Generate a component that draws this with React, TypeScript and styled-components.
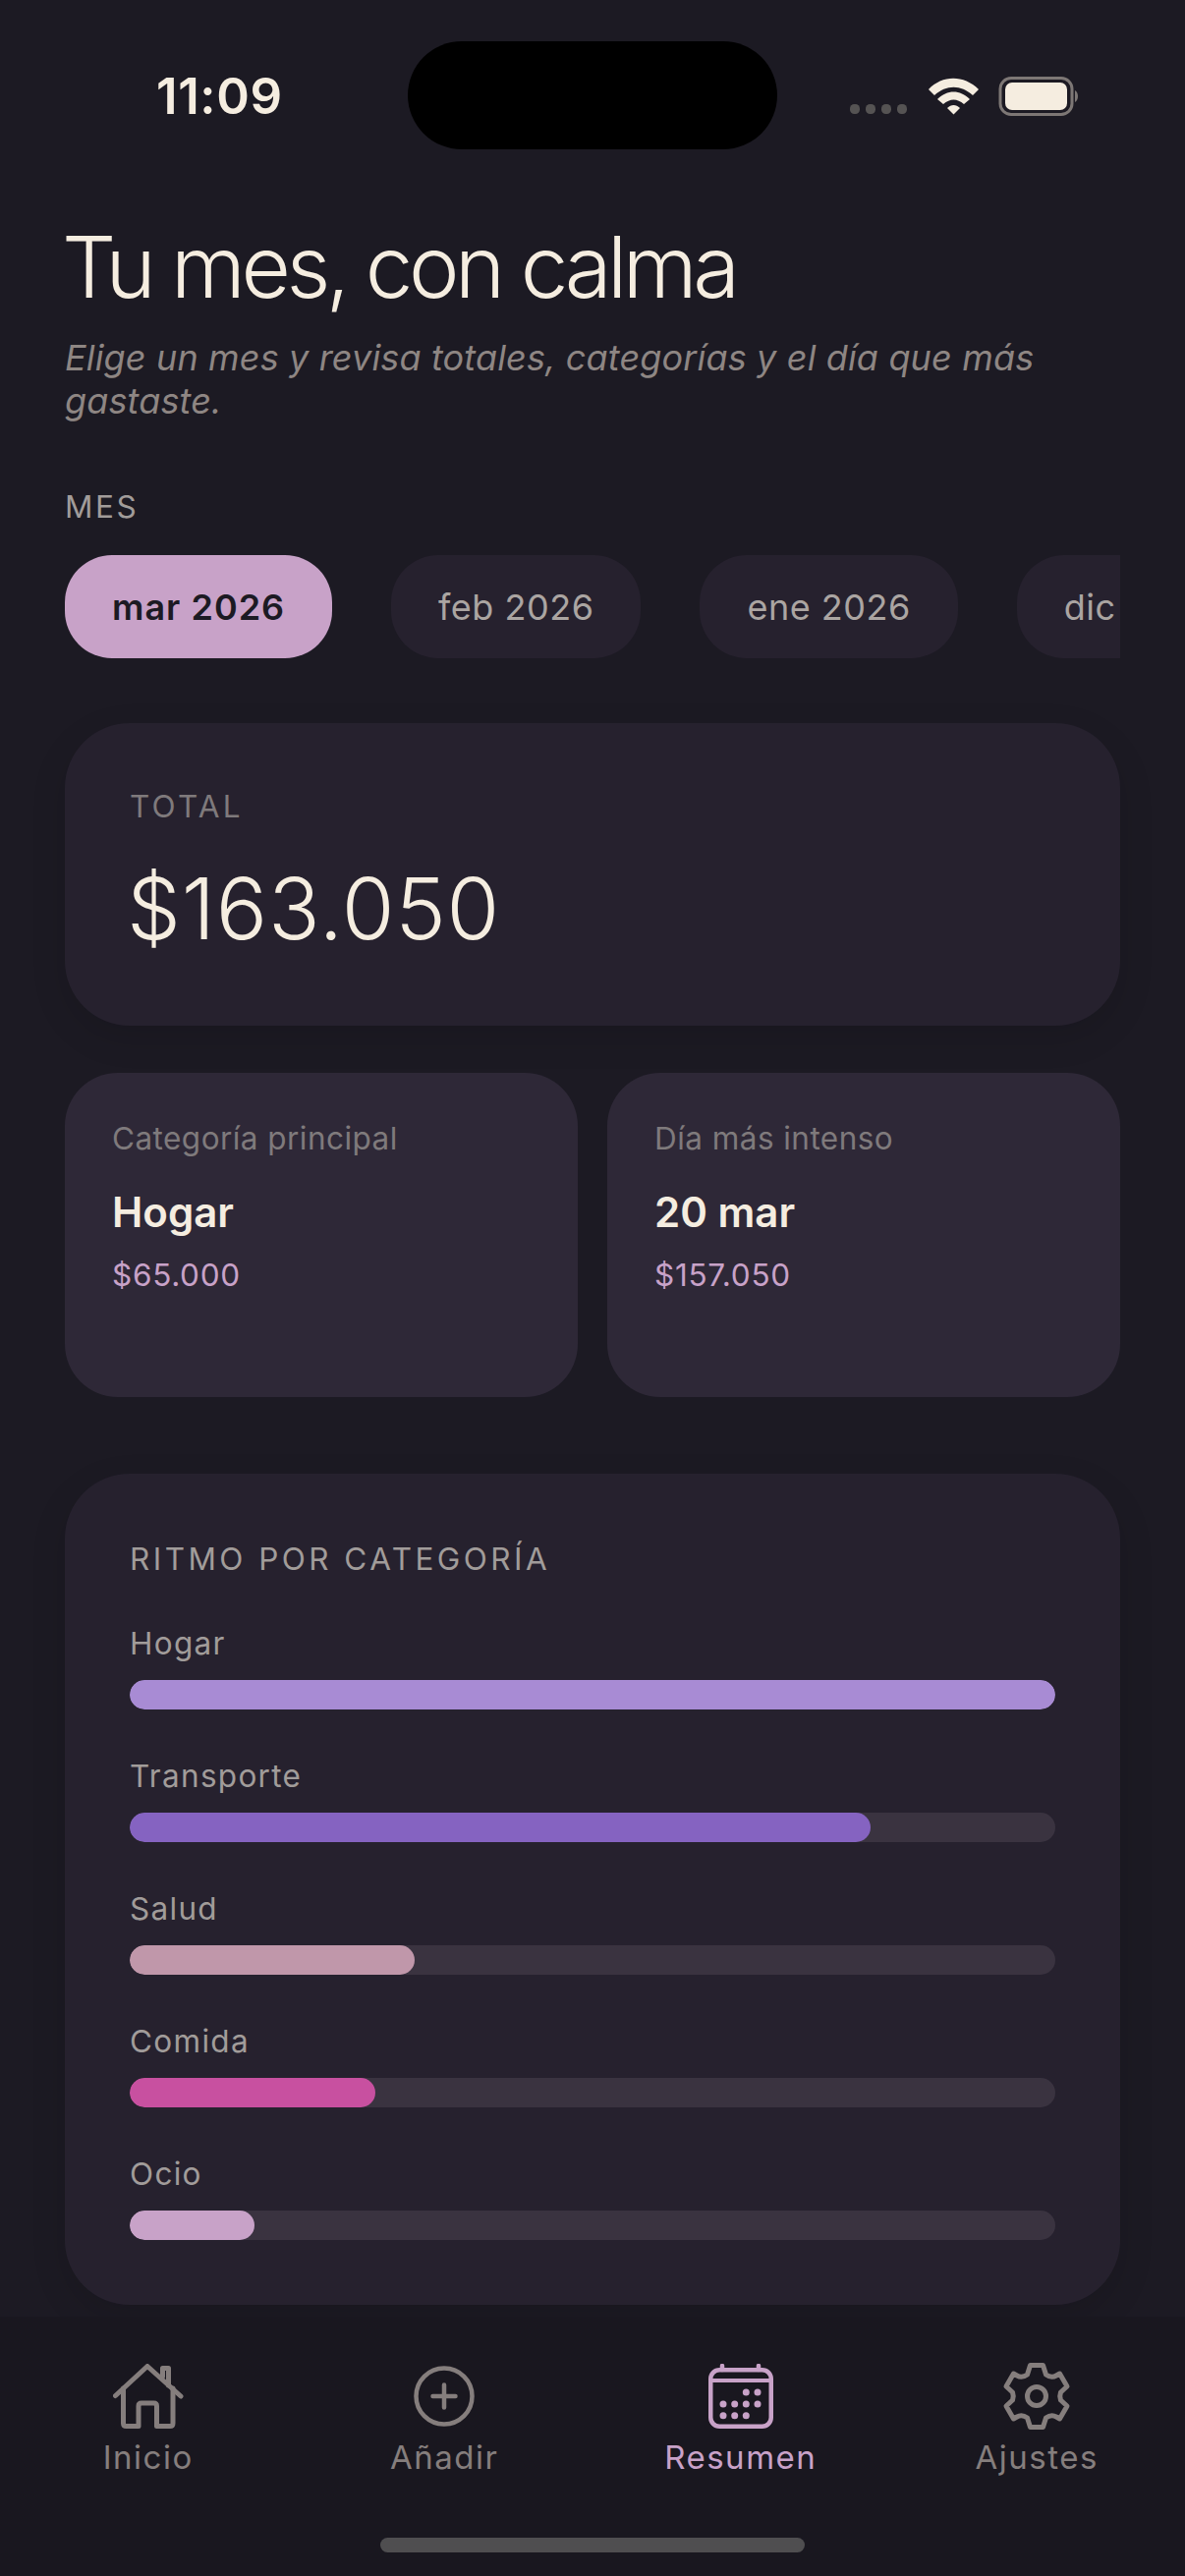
import React from "react";
import styled, { createGlobalStyle } from "styled-components";

const Global = createGlobalStyle`
  html, body { margin: 0; padding: 0; background: #1c1a23; }
  body { font-family: Inter, "Noto Sans", sans-serif; }
`;

const Screen = styled.div`
  width: 1206px;
  height: 2622px;
  overflow: hidden;
  display: flex;
  flex-direction: column;
  background: #1c1a23;
`;

const Status = styled.div`
  flex: none;
  height: 204px;
  padding: 42px 0 0 159px;
  box-sizing: border-box;
  display: flex;
  align-items: flex-start;
`;
const Clock = styled.div`
  width: 256px;
  padding-top: 26px;
  font-size: 51px;
  line-height: 60px;
  font-weight: 600;
  letter-spacing: 0.6px;
  color: #f5ede0;
`;
const Island = styled.div`
  width: 376px;
  height: 110px;
  border-radius: 55px;
  background: #000;
`;
const Indicators = styled.div`
  margin-left: 74px;
  width: 235px;
  padding-top: 36px;
  display: flex;
`;

const Main = styled.main`
  flex: 1;
  min-height: 0;
  padding: 0 66px;
  display: flex;
  flex-direction: column;
  overflow: hidden;
`;
const Title = styled.h1`
  margin: 3px 0 0 -3px;
  font-size: 87px;
  line-height: 130px;
  font-weight: 300;
  letter-spacing: -4.5px;
  color: #f5ede0;
`;
const Subtitle = styled.p`
  margin: 5px 0 0;
  font-size: 36px;
  line-height: 44px;
  font-style: italic;
  font-weight: 400;
  letter-spacing: 0.15px;
  color: #8e8683;
`;
const SectionLabel = styled.div`
  margin-top: 67px;
  font-size: 31.5px;
  line-height: 38px;
  letter-spacing: 2.5px;
  color: #a19c9a;
`;
const Months = styled.div`
  margin-top: 30px;
  display: flex;
  gap: 60px;
  height: 105px;
  overflow: hidden;
`;
const Month = styled.div<{ $active?: boolean }>`
  flex: none;
  height: 105px;
  padding: 0 48px;
  border-radius: 48px;
  display: flex;
  align-items: center;
  font-size: 36px;
  font-weight: ${(p) => (p.$active ? 600 : 400)};
  letter-spacing: ${(p) => (p.$active ? "1px" : "0.5px")};
  background: ${(p) => (p.$active ? "#c8a2c8" : "#26212e")};
  color: ${(p) => (p.$active ? "#1c1a23" : "#aba5a2")};
`;
const TotalCard = styled.section`
  margin-top: 66px;
  height: 308px;
  box-sizing: border-box;
  padding: 66px 66px 0;
  border-radius: 66px;
  background: #26212e;
  box-shadow: 0 12px 36px rgba(0, 0, 0, 0.12);
`;
const TotalLabel = styled.div`
  font-size: 31.5px;
  line-height: 38px;
  letter-spacing: 3.2px;
  color: #7f7a7c;
`;
const TotalValue = styled.div`
  margin: 35px 0 0 -3px;
  font-size: 87px;
  line-height: 100px;
  font-weight: 300;
  letter-spacing: 0.8px;
  color: #f5ede0;
`;
const Stats = styled.div`
  margin-top: 48px;
  display: grid;
  grid-template-columns: 1fr 1fr;
  gap: 30px;
`;
const StatCard = styled.section`
  height: 330px;
  box-sizing: border-box;
  padding: 48px;
  border-radius: 54px;
  background: #2e2837;
`;
const StatLabel = styled.div`
  font-size: 31.5px;
  line-height: 38px;
  letter-spacing: 0.45px;
  color: #7f7a7c;
`;
const StatValue = styled.div`
  margin-top: 31px;
  font-size: 42px;
  line-height: 50px;
  font-weight: 600;
  color: #f5ede0;
`;
const StatNote = styled.div`
  margin-top: 20px;
  font-size: 31.5px;
  line-height: 38px;
  letter-spacing: 0.7px;
  color: #c8a2c8;
`;
const RhythmCard = styled.section`
  margin-top: 78px;
  height: 846px;
  box-sizing: border-box;
  padding: 68px 66px 66px;
  border-radius: 66px;
  background: #26212e;
  box-shadow: 0 12px 36px rgba(0, 0, 0, 0.12);
`;
const RhythmTitle = styled.div`
  font-size: 31.5px;
  line-height: 38px;
  letter-spacing: 3.45px;
  color: #a19c9a;
`;
const Rows = styled.div`
  margin-top: 48px;
  display: flex;
  flex-direction: column;
  gap: 49px;
`;
const Row = styled.div`
  display: flex;
  flex-direction: column;
  gap: 18px;
`;
const RowLabel = styled.div`
  font-size: 31.5px;
  line-height: 38px;
  letter-spacing: 1.3px;
  color: #a19c9a;
`;
const Track = styled.div`
  height: 30px;
  border-radius: 15px;
  background: #3a3340;
  overflow: hidden;
`;
const Fill = styled.div<{ $color: string }>`
  height: 100%;
  border-radius: 15px;
  background: ${(p) => p.$color};
`;

const TabBar = styled.nav`
  flex: none;
  height: 264px;
  box-sizing: border-box;
  padding: 45px 0 0;
  background: #19171f;
  display: flex;
  flex-direction: column;
  align-items: center;
`;
const Tabs = styled.div`
  width: 100%;
  display: grid;
  grid-template-columns: repeat(4, 1fr);
`;
const Tab = styled.div<{ $active?: boolean }>`
  display: flex;
  flex-direction: column;
  align-items: center;
  gap: 6px;
  color: ${(p) => (p.$active ? "#c8a2c8" : "#857e7d")};
  font-size: 33px;
  line-height: 40px;
  font-weight: 400;
  letter-spacing: 1.5px;
`;
const IconBox = styled.div`
  height: 72px;
  display: flex;
  align-items: center;
  justify-content: center;
`;
const HomeBar = styled.div`
  margin-top: 62px;
  width: 432px;
  height: 15px;
  border-radius: 8px;
  background: #4f4e50;
`;

const StatusIcons = () => (
  <svg width="235" height="42" viewBox="0 0 235 42">
    <g fill="#555353">
      <rect x="0" y="28" width="10" height="10" rx="4.500" />
      <rect x="16" y="28" width="10" height="10" rx="4.500" />
      <rect x="32" y="28" width="10" height="10" rx="4.500" />
      <rect x="48" y="28" width="10" height="10" rx="4.500" />
    </g>
    <g fill="#f5ede0">
      <path d="M80 12 C94 -3 116 -3 131 12 L125 18 C113 7 98 7 86 18 Z" transform="translate(0 1)" />
      <path d="M89 23 C99 13 112 13 122 23 L116 28 C109 22 102 22 95 28 Z" />
      <path d="M99 32 C103 28 108 28 112 32 L105.500 38.500 Z" />
    </g>
    <rect x="153" y="1.500" width="73" height="37" rx="11" fill="none" stroke="#7d7775" strokeWidth="3" />
    <rect x="158" y="6" width="63" height="28" rx="7" fill="#f5ede0" />
    <path d="M229 14 C233 16 233 24 229 26 Z" fill="#7d7775" />
  </svg>
);

const HomeIcon = () => (
  <svg width="72" height="66" viewBox="0 0 72 66" fill="none" stroke="currentColor" strokeWidth="5" strokeLinecap="round" strokeLinejoin="round">
    <path d="M2.500 32.500 L35 2.500 L69 33" />
    <path d="M10.500 25 V60.500 Q10.500 63.500 13.500 63.500 H26 V43 Q26 40 29 40 H41.500 Q44.500 40 44.500 43 V63.500 H58 Q61 63.500 61 60.500 V25" />
    <path d="M50.500 13 V4.500 H56.500 V22" />
  </svg>
);
const PlusIcon = () => (
  <svg width="62" height="62" viewBox="0 0 62 62" fill="none" stroke="currentColor" strokeLinecap="round" strokeWidth="4.500">
    <circle cx="31" cy="31" r="28.500" />
    <path d="M19.500 31 H42.500 M31 19.500 V42.500" />
  </svg>
);
const CalendarIcon = () => (
  <svg width="66" height="66" viewBox="0 0 66 66" fill="none">
    <path d="M14 2 V6 M51 2 V6" stroke="currentColor" strokeWidth="4.500" strokeLinecap="round" />
    <rect x="2.250" y="6.250" width="61.500" height="57.500" rx="9" stroke="currentColor" strokeWidth="4.500" />
    <path d="M2 17 H64" stroke="currentColor" strokeWidth="4" />
    <g fill="currentColor">
      <circle cx="38.300" cy="29" r="3.500" /><circle cx="50" cy="29" r="3.500" />
      <circle cx="15" cy="41" r="3.500" /><circle cx="26.700" cy="41" r="3.500" /><circle cx="38.300" cy="41" r="3.500" /><circle cx="50" cy="41" r="3.500" />
      <circle cx="15" cy="52.700" r="3.500" /><circle cx="26.700" cy="52.700" r="3.500" /><circle cx="38.300" cy="52.700" r="3.500" />
    </g>
  </svg>
);
const GearIcon = () => (
  <svg width="72" height="72" viewBox="-36 -36 72 72" fill="none" stroke="currentColor" strokeWidth="5" strokeLinecap="round" strokeLinejoin="round">
    <path d="M-6.500 -31.500 H6.500 L9.500 -22 Q15 -18 20 -21 L23.500 -23 L31 -10 L24.500 -4 Q23 0 24.500 4 L31 10 L23.500 23 L20 21 Q15 18 9.500 22 L6.500 31.500 H-6.500 L-9.500 22 Q-15 18 -20 21 L-23.500 23 L-31 10 L-24.500 4 Q-23 0 -24.500 -4 L-31 -10 L-23.500 -23 L-20 -21 Q-15 -18 -9.500 -22 Z" />
    <circle cx="0" cy="0" r="9.500" />
  </svg>
);

const rows = [
  { name: "Hogar", pct: 100, color: "#a88bd4" },
  { name: "Transporte", pct: 80, color: "#8563c1" },
  { name: "Salud", pct: 30.800, color: "#c097aa" },
  { name: "Comida", pct: 26.500, color: "#c850a0" },
  { name: "Ocio", pct: 13.500, color: "#c8a2c8" },
];

export default function App() {
  return (
    <Screen>
      <Global />
      <Status>
        <Clock>11:09</Clock>
        <Island />
        <Indicators><StatusIcons /></Indicators>
      </Status>
      <Main>
        <Title>Tu mes, con calma</Title>
        <Subtitle>Elige un mes y revisa totales, categorías y el día que más gastaste.</Subtitle>
        <SectionLabel>MES</SectionLabel>
        <Months>
          <Month $active>mar 2026</Month>
          <Month>feb 2026</Month>
          <Month>ene 2026</Month>
          <Month>dic 2025</Month>
        </Months>
        <TotalCard>
          <TotalLabel>TOTAL</TotalLabel>
          <TotalValue>$163.050</TotalValue>
        </TotalCard>
        <Stats>
          <StatCard>
            <StatLabel>Categoría principal</StatLabel>
            <StatValue>Hogar</StatValue>
            <StatNote>$65.000</StatNote>
          </StatCard>
          <StatCard>
            <StatLabel>Día más intenso</StatLabel>
            <StatValue>20 mar</StatValue>
            <StatNote>$157.050</StatNote>
          </StatCard>
        </Stats>
        <RhythmCard>
          <RhythmTitle>RITMO POR CATEGORÍA</RhythmTitle>
          <Rows>
            {rows.map((r) => (
              <Row key={r.name}>
                <RowLabel>{r.name}</RowLabel>
                <Track>
                  <Fill $color={r.color} style={{ width: `${r.pct}%` }} />
                </Track>
              </Row>
            ))}
          </Rows>
        </RhythmCard>
      </Main>
      <TabBar>
        <Tabs>
          <Tab><IconBox><HomeIcon /></IconBox>Inicio</Tab>
          <Tab><IconBox><PlusIcon /></IconBox>Añadir</Tab>
          <Tab $active><IconBox><CalendarIcon /></IconBox>Resumen</Tab>
          <Tab><IconBox><GearIcon /></IconBox>Ajustes</Tab>
        </Tabs>
        <HomeBar />
      </TabBar>
    </Screen>
  );
}
